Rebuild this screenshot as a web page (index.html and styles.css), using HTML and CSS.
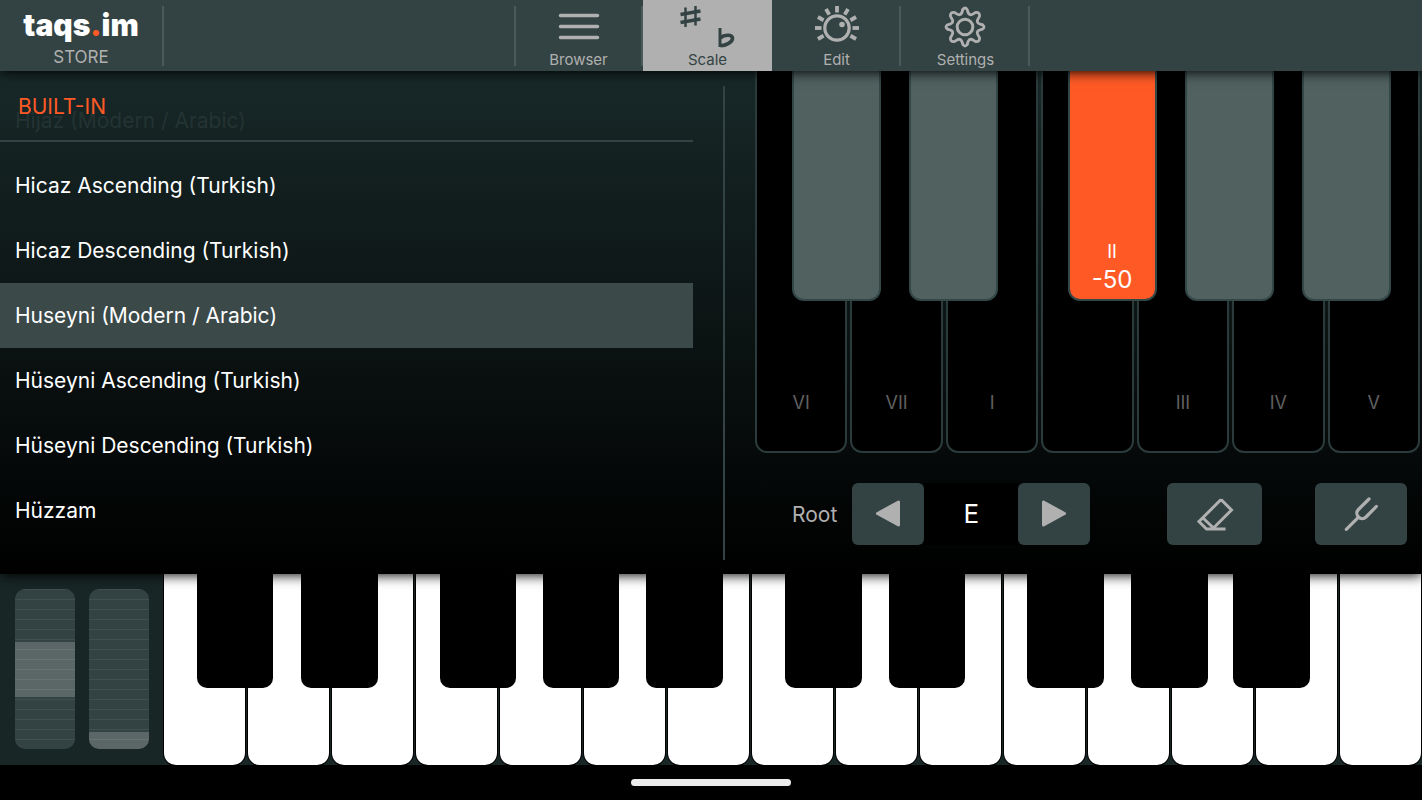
FILE: index.html
```html
<!DOCTYPE html>
<html lang="en">
  <head>
    <meta charset="utf-8">
    <meta name="viewport" content="width=device-width, initial-scale=1.0">
    <title>taqs.im</title>
    <link rel="stylesheet" href="styles.css">
  </head>
  <body>
    <header class="topbar">
      <a class="store" href="#store">
        <span class="logo">taqs<span class="logo-dot">.</span>im</span>
        <span class="store-label">STORE</span>
      </a>
      <nav class="tabs">
        <button class="tab">
          <svg class="tab-icon" viewBox="0 0 48 48" fill="none" stroke="currentColor" stroke-width="4" stroke-linecap="round">
            <path d="M5.500 12.500H42.500M5.500 23.500H42.500M5.500 34.500H42.500" stroke-width="3.500"/>
          </svg>
          <span>Browser</span>
        </button>
        <button class="tab active">
          <svg class="scale-icon" viewBox="0 0 64 48" fill="none" stroke="currentColor">
            <path d="M9.500 4.500V24M19.500 3V22.500" stroke-width="2.500"/>
            <path d="M4.500 11.500L24.500 8M4.500 19.500L24.500 16" stroke-width="3.500"/>
            <path d="M44 25V44" stroke-width="3"/>
            <path d="M44.500 35C48 31.500 56.500 31 56.500 35.500C56.500 39 50 42.500 44.500 42.800" stroke-width="3.600"/>
          </svg>
          <span>Scale</span>
        </button>
        <button class="tab">
          <svg class="tab-icon" viewBox="0 0 48 48" fill="none" stroke="currentColor">
            <circle cx="24" cy="25" r="12.200" stroke-width="3.200"/>
            <circle cx="29" cy="21.500" r="2.800" fill="currentColor" stroke="none"/>
            <g stroke-width="3.800">
              <path id="tick" d="M24 3V9.500"/>
              <use href="#tick" transform="rotate(30 24 25)"/>
              <use href="#tick" transform="rotate(60 24 25)"/>
              <use href="#tick" transform="rotate(90 24 25)"/>
              <use href="#tick" transform="rotate(120 24 25)"/>
              <use href="#tick" transform="rotate(-30 24 25)"/>
              <use href="#tick" transform="rotate(-60 24 25)"/>
              <use href="#tick" transform="rotate(-90 24 25)"/>
              <use href="#tick" transform="rotate(-120 24 25)"/>
            </g>
          </svg>
          <span>Edit</span>
        </button>
        <button class="tab">
          <svg class="tab-icon" viewBox="-2 -3 48 48" fill="none" stroke="currentColor" stroke-width="2.800" stroke-linecap="round">
            <circle cx="21" cy="21" r="7.800" stroke-width="3"/>
            <path id="gear" d="M18.800 3.500Q21 .5 23.200 3.500C23.800 6 24 8.200 26.200 8.700C28.400 9.200 29.800 7 32 6.400Q35.800 6.200 35.600 10C35 12.200 32.800 13.600 33.300 15.800C33.800 18 36 18.200 38.500 18.800"/>
            <use href="#gear" transform="rotate(90 21 21)"/>
            <use href="#gear" transform="rotate(180 21 21)"/>
            <use href="#gear" transform="rotate(270 21 21)"/>
          </svg>
          <span>Settings</span>
        </button>
      </nav>
    </header>

    <main class="panel">
      <section class="scales">
        <h2 class="scales-title">BUILT-IN</h2>
        <button class="scale faded">Hijaz (Modern / Arabic)</button>
        <button class="scale">Hicaz Ascending (Turkish)</button>
        <button class="scale">Hicaz Descending (Turkish)</button>
        <button class="scale selected">Huseyni (Modern / Arabic)</button>
        <button class="scale">Hüseyni Ascending (Turkish)</button>
        <button class="scale">Hüseyni Descending (Turkish)</button>
        <button class="scale">Hüzzam</button>
      </section>

      <section class="tuning">
        <div class="octave">
          <button class="degree">VI</button>
          <button class="degree">VII</button>
          <button class="degree">I</button>
          <button class="degree" aria-label="D"></button>
          <button class="degree">III</button>
          <button class="degree">IV</button>
          <button class="degree">V</button>
          <div class="octave-sharps">
            <button class="accidental" aria-label="F sharp"></button>
            <button class="accidental" aria-label="G sharp"></button>
            <button class="accidental detuned">
              <span>II</span>
              <span class="cents">-50</span>
            </button>
            <button class="accidental" aria-label="D sharp"></button>
            <button class="accidental" aria-label="E sharp"></button>
          </div>
        </div>

        <div class="controls">
          <label class="root-label" for="root">Root</label>
          <button class="control prev" aria-label="Previous root">
            <svg class="arrow" viewBox="0 0 28 28" fill="currentColor" stroke="currentColor" stroke-width="3" stroke-linejoin="round">
              <path d="M24.500 2V25L3.500 13.500Z"/>
            </svg>
          </button>
          <output class="root" id="root">E</output>
          <button class="control next" aria-label="Next root">
            <svg class="arrow" viewBox="0 0 28 28" fill="currentColor" stroke="currentColor" stroke-width="3" stroke-linejoin="round">
              <path d="M3.500 2V25L24.500 13.500Z"/>
            </svg>
          </button>
          <button class="control erase" aria-label="Clear tuning">
            <svg class="tool" viewBox="0 0 40 40" fill="none" stroke="currentColor" stroke-width="3">
              <path d="M26 5.500L36.500 16L18.500 34L8 24M26 5.500L4 27.500L11.500 35H30.500"/>
            </svg>
          </button>
          <button class="control fork" aria-label="Tune">
            <svg class="tool" viewBox="0 0 40 40" fill="none" stroke="currentColor" stroke-width="3.200" stroke-linecap="round">
              <path d="M28 5L17.500 15.500C12.500 20.500 20 28 25 23L35.300 12.500M17.300 23.300L5.300 35.300"/>
            </svg>
          </button>
        </div>
      </section>
    </main>

    <section class="keyboard">
      <div class="wheels">
        <input class="wheel pitch" type="range" min="0" max="100" value="50" aria-label="Pitch bend">
        <input class="wheel mod" type="range" min="0" max="100" value="0" aria-label="Modulation">
      </div>
      <div class="keys">
        <button class="key" aria-label="C2"></button>
        <button class="key" aria-label="D2"></button>
        <button class="key" aria-label="E2"></button>
        <button class="key" aria-label="F2"></button>
        <button class="key" aria-label="G2"></button>
        <button class="key" aria-label="A2"></button>
        <button class="key" aria-label="B2"></button>
        <button class="key" aria-label="C3"></button>
        <button class="key" aria-label="D3"></button>
        <button class="key" aria-label="E3"></button>
        <button class="key" aria-label="F3"></button>
        <button class="key" aria-label="G3"></button>
        <button class="key" aria-label="A3"></button>
        <button class="key" aria-label="B3"></button>
        <button class="key" aria-label="C4"></button>
        <div class="sharps">
          <button class="sharp" aria-label="C sharp 2"></button>
          <button class="sharp" aria-label="D sharp 2"></button>
          <button class="sharp" aria-label="F sharp 2"></button>
          <button class="sharp" aria-label="G sharp 2"></button>
          <button class="sharp" aria-label="A sharp 2"></button>
          <button class="sharp" aria-label="C sharp 3"></button>
          <button class="sharp" aria-label="D sharp 3"></button>
          <button class="sharp" aria-label="F sharp 3"></button>
          <button class="sharp" aria-label="G sharp 3"></button>
          <button class="sharp" aria-label="A sharp 3"></button>
        </div>
      </div>
    </section>

    <footer class="home">
      <div class="home-bar"></div>
    </footer>
  </body>
</html>
```

FILE: styles.css
```css
* {
  box-sizing: border-box;
}

body {
  display: flex;
  flex-direction: column;
  min-height: 100vh;
  margin: 0;
  background-color: #000;
  color: #fff;
  font-family: Inter, sans-serif;
}

button {
  margin: 0;
  padding: 0;
  border: none;
  background: none;
  color: inherit;
  font: inherit;
}

/* Top bar */

.topbar {
  display: grid;
  grid-template-columns: 164px 350fr 516px 392fr;
  height: 71px;
  background-color: #334343;
  color: #b0b0b0;
  box-shadow: 0 1px 12px #000;
  position: relative;
  z-index: 2;
}

.store {
  display: flex;
  flex-direction: column;
  align-items: center;
  height: 60px;
  margin-top: 6px;
  border-right: 2px solid #4a5a5a;
  color: inherit;
  text-decoration: none;
}

.logo {
  color: #fff;
  font-size: 30px;
  font-weight: 900;
  line-height: 38px;
}

.logo-dot {
  color: #ff5a26;
}

.store-label {
  font-size: 17px;
  line-height: 26px;
}

.tabs {
  grid-column: 3;
  display: flex;
  background: linear-gradient(#4a5a5a, #4a5a5a) left center / 2px 60px no-repeat;
}

.tab {
  display: flex;
  flex: 1;
  flex-direction: column;
  align-items: center;
  padding-top: 3px;
  background: linear-gradient(#4a5a5a, #4a5a5a) right center / 2px 60px no-repeat;
  font-size: 15px;
  line-height: 17px;
}

.tab.active {
  background: #b0b0b0;
  color: #334343;
}

.tab-icon {
  width: 48px;
  height: 48px;
}

.scale-icon {
  width: 64px;
  height: 48px;
}

/* Scale panel */

.panel {
  display: grid;
  grid-template-columns: 693fr 62px 667fr;
  flex: 1;
  background: linear-gradient(#182828, #000);
  box-shadow: 0 1px 12px #000;
  position: relative;
  z-index: 1;
}

.panel::after {
  content: "";
  grid-column: 2;
  grid-row: 1;
  width: 2px;
  margin: 15px 0 14px 30px;
  background-color: #334343;
}

.scales {
  display: flex;
  flex-direction: column;
  padding-top: 17px;
  position: relative;
}

.scales-title {
  position: absolute;
  top: 0;
  left: 0;
  right: 0;
  height: 71px;
  margin: 0;
  padding: 20px 18px;
  border-bottom: 2px solid #334343;
  color: #ff5a26;
  font-size: 21px;
  font-weight: 400;
  line-height: 32px;
}

.scale {
  height: 65px;
  padding: 0 15px;
  font-size: 21px;
  text-align: left;
}

.scale.faded {
  color: #243333;
}

.scale.selected {
  background-color: #3b4949;
}

.tuning {
  grid-column: 3;
  grid-row: 1;
}

.octave {
  display: flex;
  gap: 3px;
  height: 382px;
  margin-right: 2px;
  position: relative;
}

.degree {
  flex: 1;
  padding-top: 282px;
  border: 2px solid #2b3b3b;
  border-top: none;
  border-radius: 0 0 12px 12px;
  background-color: #000;
  color: #606060;
  font-size: 18px;
}

/* Sharps lie over the gaps between the wide keys */

.octave-sharps,
.sharps {
  position: absolute;
  top: 0;
  left: 0;
  right: 0;
}

.accidental {
  display: flex;
  flex-direction: column;
  align-items: center;
  justify-content: flex-end;
  position: absolute;
  top: 0;
  left: 5.6%;
  width: 13.4%;
  height: 230px;
  padding-bottom: 5px;
  border: 2px solid #334747;
  border-top: none;
  border-radius: 0 0 12px 12px;
  background-color: #506160;
  font-size: 18px;
  line-height: 28px;
}

.accidental:nth-child(2) { left: 23.2%; }
.accidental:nth-child(3) { left: 47%; }
.accidental:nth-child(4) { left: 64.6%; }
.accidental:nth-child(5) { left: 82.2%; }

.accidental.detuned {
  background-color: #ff5a26;
}

.cents {
  font-size: 24px;
}

.controls {
  display: flex;
  align-items: center;
  margin-top: 30px;
  padding: 0 15px 0 37px;
}

.root-label {
  margin-right: 15px;
  color: #b0b0b0;
  font-size: 21px;
}

.control {
  display: flex;
  align-items: center;
  justify-content: center;
  width: 72px;
  height: 62px;
  border-radius: 6px;
  background-color: #334343;
  color: #b0b0b0;
}

.root {
  width: 94px;
  background-color: #000;
  font-size: 26px;
  line-height: 62px;
  text-align: center;
}

.erase {
  width: 95px;
  margin-left: auto;
}

.fork {
  width: 92px;
  margin-left: 53px;
}

.arrow {
  width: 28px;
  height: 28px;
}

.tool {
  width: 40px;
  height: 40px;
}

/* Playing keyboard */

.keyboard {
  display: flex;
  height: 191px;
  background-color: #182626;
}

.wheels {
  display: flex;
  gap: 14px;
  width: 164px;
  padding: 15px 15px 0;
}

.wheel {
  appearance: none;
  writing-mode: vertical-lr;
  direction: rtl;
  width: 60px;
  height: 160px;
  margin: 0;
  border-radius: 10px;
  background: linear-gradient(#334242 9px, #414f4f 9px) 0 1px / 100% 10px;
  overflow: hidden;
}

.wheel::-webkit-slider-thumb {
  appearance: none;
  width: 60px;
  height: 55px;
  background-color: rgba(255, 255, 255, 0.2);
}

.mod::-webkit-slider-thumb {
  height: 17px;
}

.keys {
  display: flex;
  flex: 1;
  gap: 3px;
  padding-right: 1px;
  position: relative;
}

.key {
  flex: 1;
  border-radius: 0 0 12px 12px;
  background-color: #fff;
  box-shadow: 0 0 0 1px #000;
}

.sharp {
  position: absolute;
  top: 0;
  left: 2.6%;
  width: 6.1%;
  height: 114px;
  border-radius: 0 0 10px 10px;
  background-color: #000;
}

.sharp:nth-child(2) { left: 10.9%; }
.sharp:nth-child(3) { left: 21.9%; }
.sharp:nth-child(4) { left: 30.1%; }
.sharp:nth-child(5) { left: 38.3%; }
.sharp:nth-child(6) { left: 49.4%; }
.sharp:nth-child(7) { left: 57.6%; }
.sharp:nth-child(8) { left: 68.6%; }
.sharp:nth-child(9) { left: 76.9%; }
.sharp:nth-child(10) { left: 85%; }

/* Home indicator */

.home {
  display: flex;
  justify-content: center;
  height: 35px;
  padding-top: 14px;
}

.home-bar {
  width: 160px;
  height: 7px;
  border-radius: 4px;
  background-color: #ececec;
}
```
